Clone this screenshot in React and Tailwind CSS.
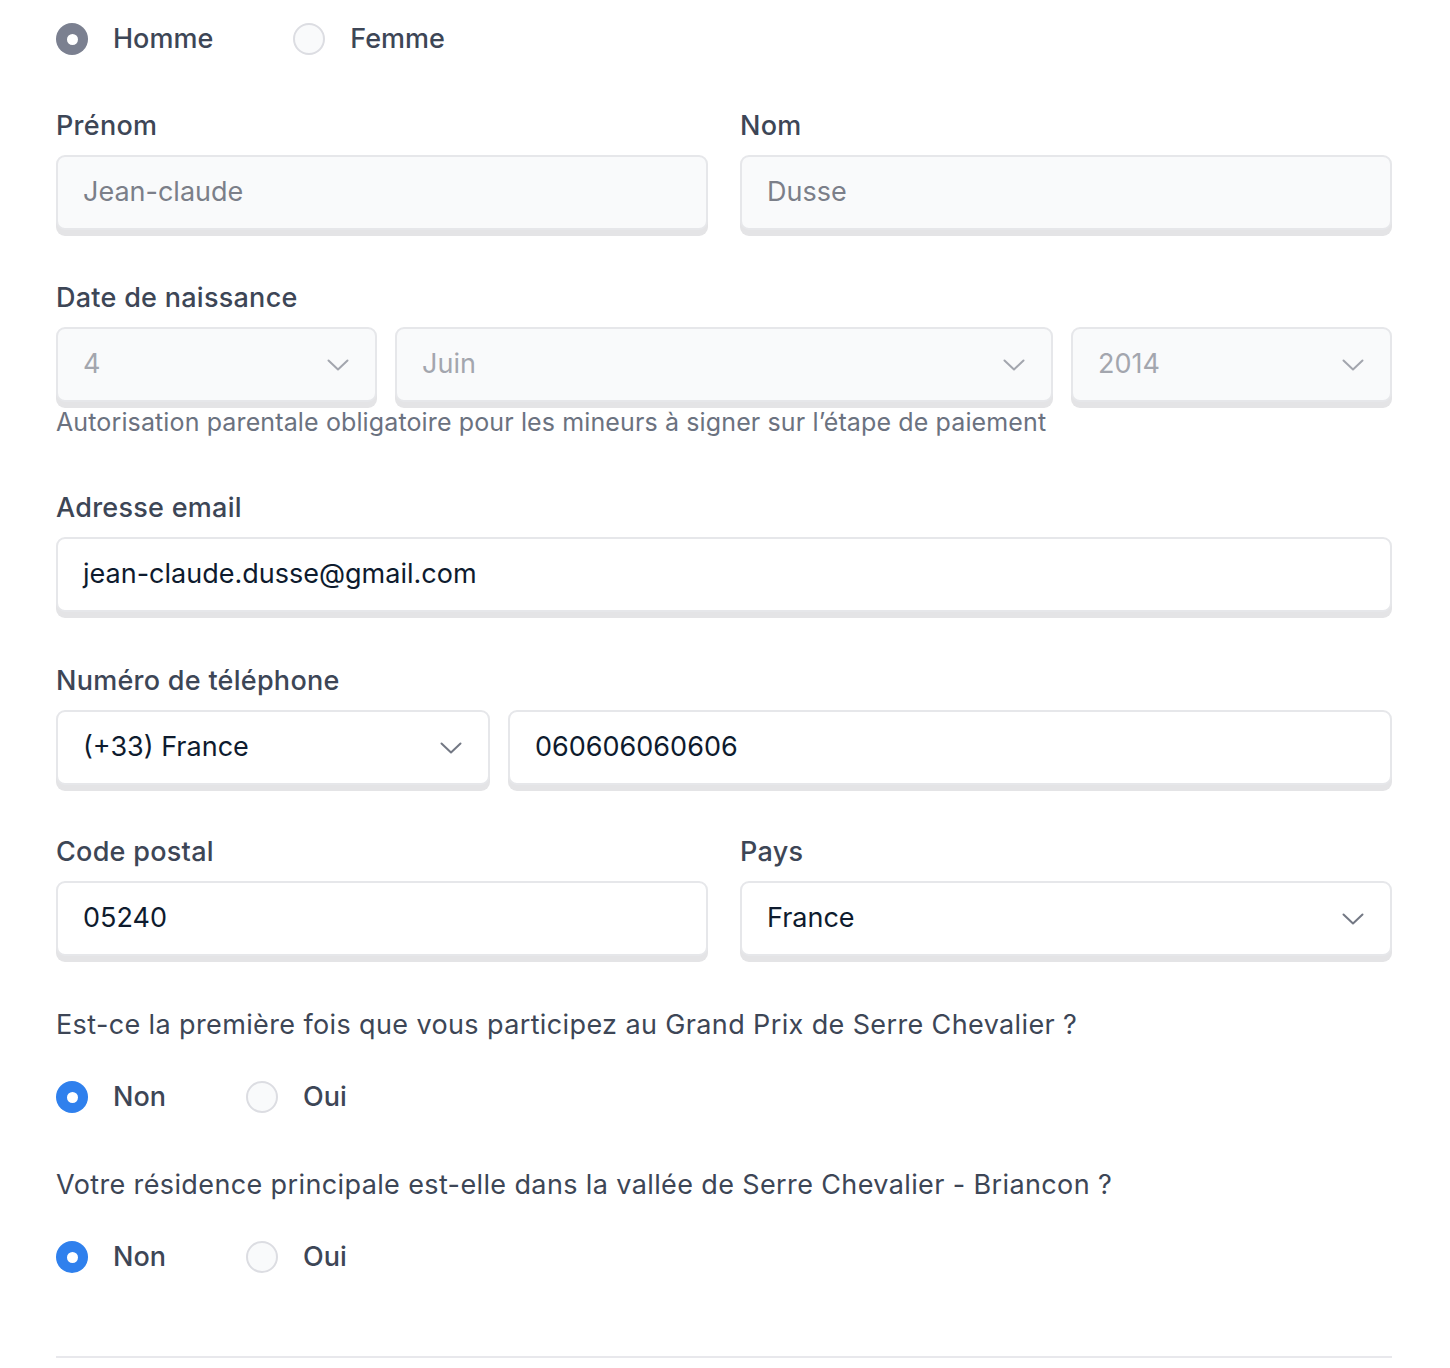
const FONT = { fontFamily: "Inter, 'Noto Sans', sans-serif" };

function Chevron({ faint }) {
    return (
        <svg width="22" height="12" viewBox="0 0 22 12" fill="none"
            className={faint ? 'text-[#a3a6ae]' : 'text-[#737884]'}>
            <polyline points="1.5,1.5 11,10.5 20.5,1.5" stroke="currentColor" strokeWidth="2" strokeLinecap="round" strokeLinejoin="round" />
        </svg>
    );
}

function Radio({ checked, color = 'blue', label }) {
    const ring = checked
        ? color === 'blue' ? 'bg-[#2f80ed]' : 'bg-[#7b8090]'
        : 'border-2 border-[#dcdde2] bg-[#f9fafb]';
    return (
        <label className="flex items-center gap-[25px]">
            <span className={`w-8 h-8 rounded-full flex items-center justify-center ${ring}`}>
                {checked && <span className="w-[11px] h-[11px] rounded-full bg-white" />}
            </span>
            <span className="text-[27px] font-medium text-[#3d4656]">{label}</span>
        </label>
    );
}

function Field({ value, disabled, faint, select }) {
    return (
        <div className={`h-[75px] rounded-[9px] border-2 border-[#e6e7ea] shadow-[0_6px_0_#e4e4e6] flex items-center justify-between pl-[25px] pr-[26px] ${disabled ? 'bg-[#f9fafb]' : 'bg-white'}`}>
            <span className={`text-[27px] ${faint ? 'text-[#a3a6ae]' : disabled ? 'text-[#7b7f89]' : 'text-[#0e1b2e]'}`}>{value}</span>
            {select && <Chevron faint={faint} />}
        </div>
    );
}

function Label({ children }) {
    return <p className="text-[27px] font-medium text-[#3d4656] leading-none mb-[16px] tracking-[0.01em]">{children}</p>;
}

export default function App() {
    return (
        <div className="bg-white min-h-[1368px] pl-[56px] pr-[58px] pt-[23px]" style={FONT}>
            <div className="flex gap-[80px] h-8 items-center">
                <Radio checked color="gray" label="Homme" />
                <Radio label="Femme" />
            </div>

            <div className="grid grid-cols-2 gap-x-[32px] mt-[57px]">
                <div>
                    <Label>Prénom</Label>
                    <Field value="Jean-claude" disabled />
                </div>
                <div>
                    <Label>Nom</Label>
                    <Field value="Dusse" disabled />
                </div>
            </div>

            <div className="mt-[54px]">
                <Label>Date de naissance</Label>
                <div className="grid grid-cols-[321px_1fr_321px] gap-[18px]">
                    <Field value="4" disabled faint select />
                    <Field value="Juin" disabled faint select />
                    <Field value="2014" disabled faint select />
                </div>
                <p className="text-[25px] text-[#6b7280] mt-[2px] leading-[36px] tracking-[0.005em]">
                    Autorisation parentale obligatoire pour les mineurs à signer sur l’étape de paiement
                </p>
            </div>

            <div className="mt-[54px]">
                <Label>Adresse email</Label>
                <Field value="jean-claude.dusse@gmail.com" />
            </div>

            <div className="mt-[55px]">
                <Label>Numéro de téléphone</Label>
                <div className="grid grid-cols-[434px_1fr] gap-[18px]">
                    <Field value="(+33) France" select />
                    <Field value="060606060606" />
                </div>
            </div>

            <div className="grid grid-cols-2 gap-x-[32px] mt-[53px]">
                <div>
                    <Label>Code postal</Label>
                    <Field value="05240" />
                </div>
                <div>
                    <Label>Pays</Label>
                    <Field value="France" select />
                </div>
            </div>

            <p className="text-[27px] text-[#3d4656] mt-[55px] leading-none tracking-[0.014em]">
                Est-ce la première fois que vous participez au Grand Prix de Serre Chevalier ?
            </p>
            <div className="flex gap-[80px] h-8 items-center mt-[43px]">
                <Radio checked label="Non" />
                <Radio label="Oui" />
            </div>

            <p className="text-[27px] text-[#3d4656] mt-[58px] leading-none tracking-[0.014em]">
                Votre résidence principale est-elle dans la vallée de Serre Chevalier - Briancon ?
            </p>
            <div className="flex gap-[80px] h-8 items-center mt-[43px]">
                <Radio checked label="Non" />
                <Radio label="Oui" />
            </div>

            <hr className="mt-[83px] border-0 h-[2px] bg-[#e8e8ec]" />
        </div>
    );
}
